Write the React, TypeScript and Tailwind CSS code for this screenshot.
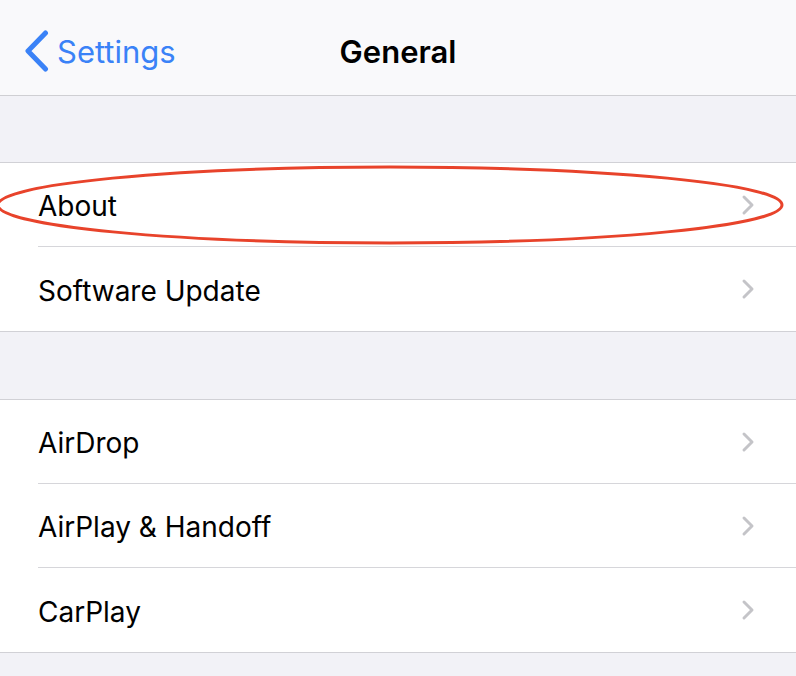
import React from 'react';

const font = { fontFamily: 'Inter, "Noto Sans", "Liberation Sans", sans-serif' };

function Chevron() {
  return (
    <svg width="14" height="22" viewBox="0 0 14 22" className="shrink-0">
      <path d="M3 3 L11 11 L3 19" fill="none" stroke="#c4c4c8" strokeWidth="3" strokeLinecap="round" strokeLinejoin="round" />
    </svg>
  );
}

function Row({ label, last }: { label: string; last?: boolean }) {
  return (
    <div className="h-[84px] pl-[38px] bg-white">
      <div className={`h-full flex items-center justify-between pr-[41px] ${last ? '' : 'border-b border-[#d6d6da]'}`}>
        <span className="text-[28px] text-black pt-[3px]">{label}</span>
        <Chevron />
      </div>
    </div>
  );
}

function Group({ items }: { items: string[] }) {
  return (
    <div className="border-y border-[#d1d1d6] bg-white">
      {items.map((it, i) => (
        <Row key={it} label={it} last={i === items.length - 1} />
      ))}
    </div>
  );
}

export default function App() {
  return (
    <div className="relative w-[796px] h-[676px] overflow-hidden bg-[#f2f2f7]" style={font}>
      {/* Nav bar */}
      <header className="h-[96px] bg-[#f9f9fb] border-b border-[#cfcfd3] grid grid-cols-[1fr_auto_1fr] items-center pt-[9px]">
        <div className="flex items-center pl-[25px] gap-[8px] text-[#3a82f7]">
          <svg width="24" height="42" viewBox="0 0 24 42" className="-mt-[2px]">
            <path d="M20.5 3 L3 21 L20.5 39" fill="none" stroke="#3a82f7" strokeWidth="5" strokeLinecap="round" strokeLinejoin="round" />
          </svg>
          <span className="text-[31px]">Settings</span>
        </div>
        <h1 className="text-[31px] font-semibold text-black">General</h1>
        <div />
      </header>

      <div className="h-[66px]" />
      <Group items={['About', 'Software Update']} />
      <div className="h-[67px]" />
      <Group items={['AirDrop', 'AirPlay & Handoff', 'CarPlay']} />

      {/* annotation */}
      <svg className="absolute inset-0 pointer-events-none" width="796" height="676">
        <ellipse cx="390" cy="205" rx="392" ry="38" fill="none" stroke="#e8432b" strokeWidth="3" />
      </svg>
    </div>
  );
}
